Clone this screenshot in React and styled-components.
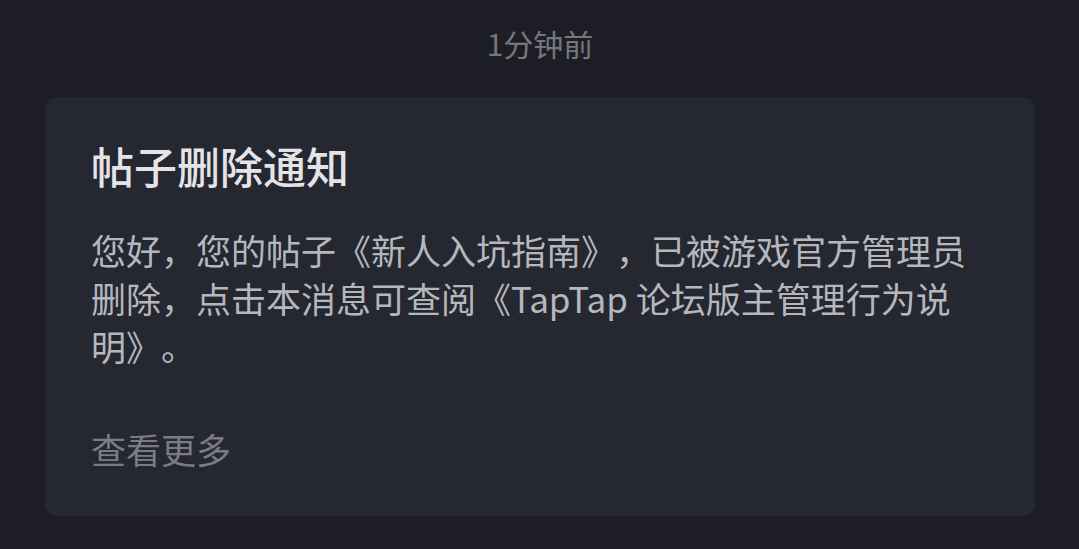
import styled, { createGlobalStyle } from "styled-components";

const GlobalStyle = createGlobalStyle`
  html, body {
    margin: 0;
    padding: 0;
    background: #1d1e25;
  }
  body {
    font-family: "Noto Sans CJK SC", "Noto Sans", sans-serif;
    text-spacing-trim: space-all;
  }
`;

const Page = styled.div`
  width: 1079px;
  height: 549px;
  box-sizing: border-box;
  padding: 23px 44px 0 45px;
  display: flex;
  flex-direction: column;
  align-items: stretch;
  background: #1d1e25;
  overflow: hidden;
`;

const Time = styled.div`
  text-align: center;
  font-size: 30px;
  line-height: 40px;
  color: #76777e;
  margin-bottom: 34px;
`;

const Card = styled.div`
  background: #252731;
  border-radius: 12px;
  padding: 40px 46px 43px;
  display: flex;
  flex-direction: column;
`;

const Title = styled.h2`
  margin: 0 0 33px;
  font-size: 43px;
  line-height: 56px;
  font-weight: 500;
  color: #e4e4e7;
`;

const Body = styled.p`
  margin: 0;
  font-size: 35px;
  line-height: 48px;
  color: #b6b7bd;
`;

const More = styled.div`
  margin-top: 55px;
  font-size: 35px;
  line-height: 48px;
  color: #7b7c83;
`;

export default function App() {
  return (
    <>
      <GlobalStyle />
      <Page>
        <Time>1分钟前</Time>
        <Card>
          <Title>帖子删除通知</Title>
          <Body>
            您好，您的帖子《新人入坑指南》，已被游戏官方管理员删除，点击本消息可查阅《TapTap 论坛版主管理行为说明》。
          </Body>
          <More>查看更多</More>
        </Card>
      </Page>
    </>
  );
}
